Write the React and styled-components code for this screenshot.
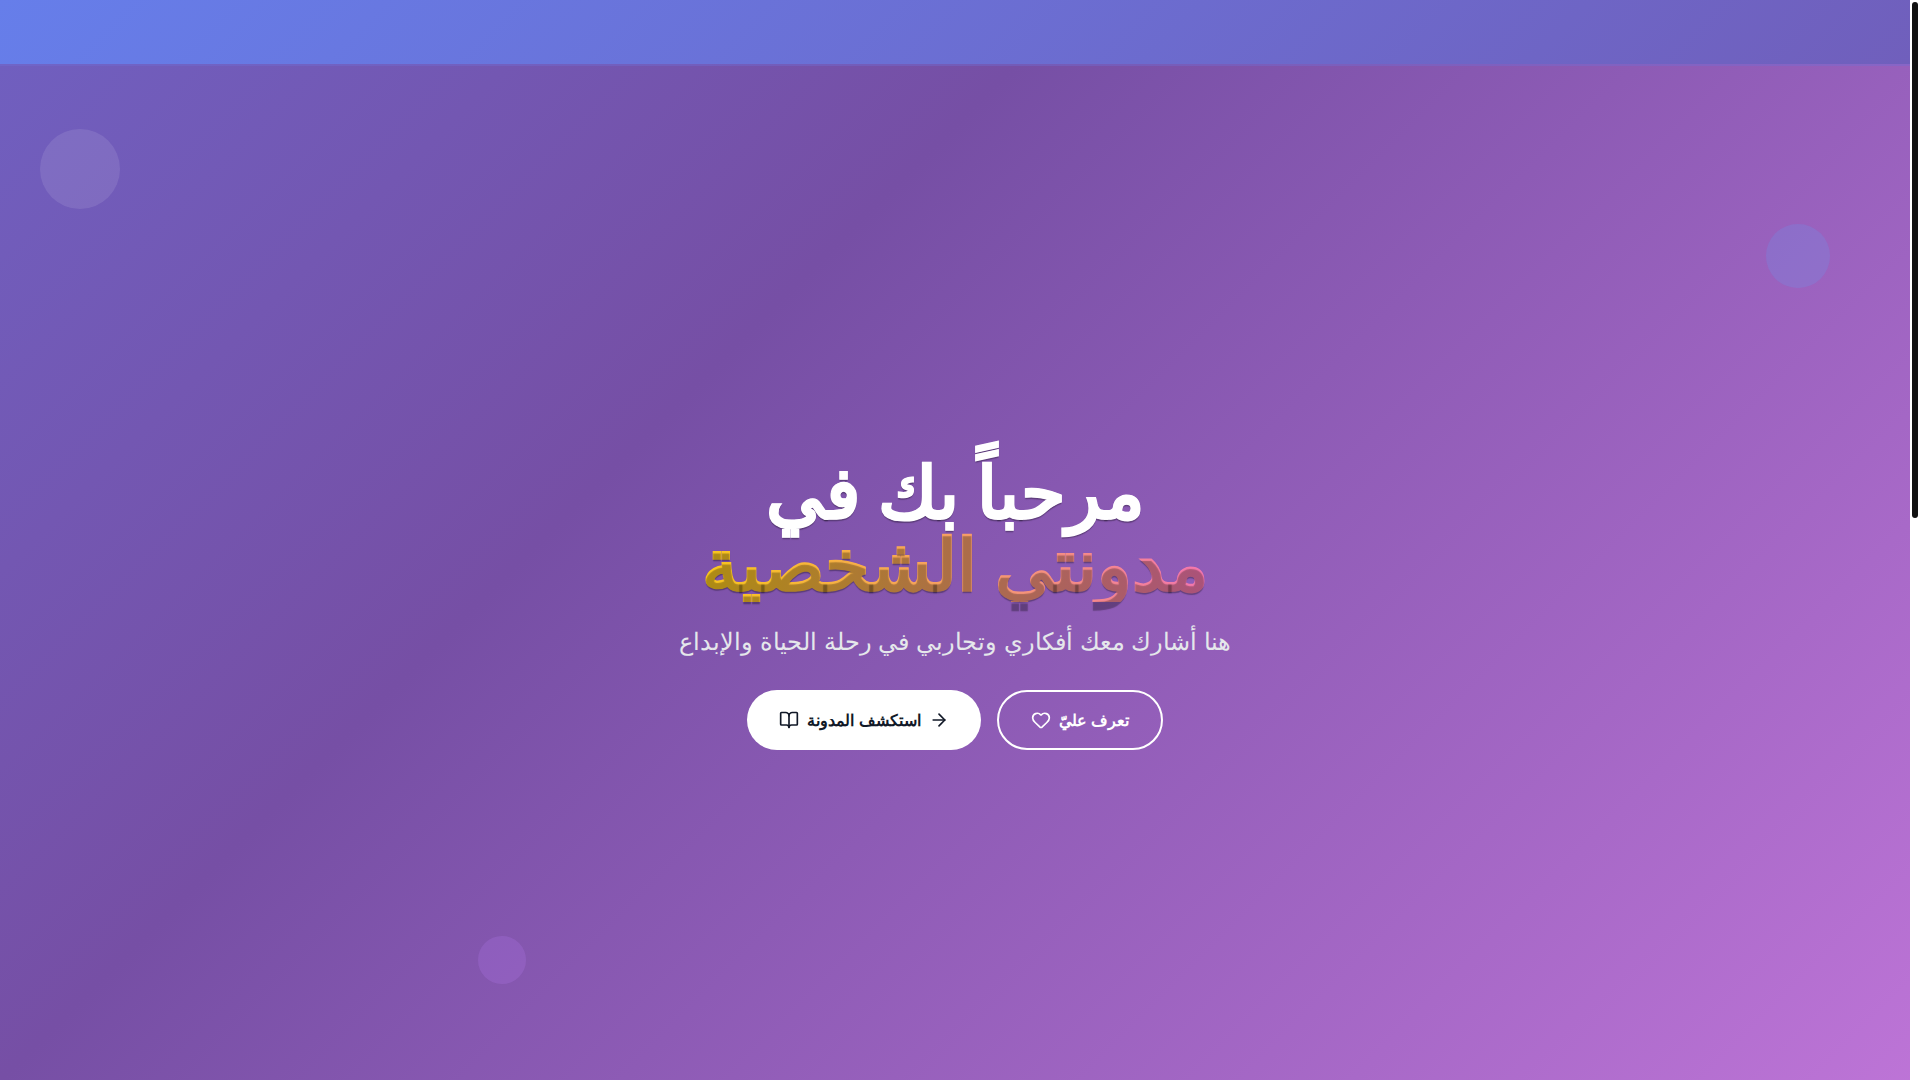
import React from 'react'
import styled, { createGlobalStyle } from 'styled-components'
import { ArrowRight, BookOpen, Heart } from 'lucide-react'

const GlobalStyle = createGlobalStyle`
  *,
  *::before,
  *::after {
    box-sizing: border-box;
  }

  body {
    margin: 0;
    background: #ffffff;
    font-family: Inter, sans-serif;
    font-size: 16px;
    line-height: 24px;
  }
`

const Window = styled.div`
  display: flex;
  height: 100vh;
  overflow: hidden;
`

const Page = styled.div`
  flex: 1;
  min-width: 0;
  overflow: hidden;
`

const Track = styled.div`
  width: 10px;
  padding: 2px;
  background: #ffffff;
`

const Thumb = styled.div`
  height: 48%;
  border-radius: 3px;
  background: #111111;
`

const Header = styled.header`
  position: relative;
  z-index: 1;
  height: 64px;
  background: linear-gradient(135deg, #667eea 0%, #705fbc 100%);
  box-shadow: 0 2px 0 rgba(112, 110, 212, 0.4);
`

const Hero = styled.section`
  position: relative;
  display: flex;
  align-items: center;
  justify-content: center;
  min-height: 100vh;
  background: linear-gradient(
    135deg,
    #705fbf 0%,
    #764fa5 34%,
    #bf75d8 100%
  );
`

const Bubble = styled.span`
  position: absolute;
  width: ${props => props.$size}px;
  height: ${props => props.$size}px;
  border-radius: 50%;
  background: ${props => props.$color};
`

const Content = styled.div`
  text-align: center;
`

const Title = styled.h1`
  margin: 0 0 24px;
  color: #ffffff;
  font-family: 'Liberation Serif', serif;
  font-size: 72px;
  font-weight: 700;
  line-height: 72px;
  text-shadow: 0 2px 1px rgba(0, 0, 0, 0.3);
  -webkit-text-stroke: 1px currentColor;
`

const Accent = styled.span`
  display: block;
  background: linear-gradient(to right, #facc15, #f472b6);
  background-clip: text;
  -webkit-background-clip: text;
  color: transparent;
`

const Subtitle = styled.p`
  margin: 0 0 32px;
  color: #e5e7eb;
  font-size: 24px;
  line-height: 32px;
`

const Buttons = styled.div`
  display: flex;
  justify-content: center;
  gap: 16px;
`

const Button = styled.button`
  display: inline-flex;
  align-items: center;
  gap: 8px;
  padding: 16px 32px;
  border: ${props => (props.$outline ? '2px solid #ffffff' : '0')};
  border-radius: 30px;
  min-height: 60px;
  background: ${props => (props.$outline ? 'transparent' : '#ffffff')};
  color: ${props => (props.$outline ? '#ffffff' : '#111827')};
  font-family: inherit;
  font-size: 16px;
  font-weight: 600;
  line-height: 24px;
  cursor: pointer;
`

const App = () => (
  <>
    <GlobalStyle />
    <Window>
      <Page>
        <Header />
        <Hero>
          <Bubble
            $size={80}
            $color="rgba(255, 255, 255, 0.1)"
            style={{ top: 65, left: 40 }}
          />
          <Bubble
            $size={64}
            $color="rgba(96, 165, 250, 0.2)"
            style={{ top: 160, right: 80 }}
          />
          <Bubble
            $size={48}
            $color="rgba(192, 132, 252, 0.2)"
            style={{ bottom: 160, left: '25%' }}
          />
          <Content lang="ar">
            <Title>
              مرحباً بك في
              <Accent>مدونتي الشخصية</Accent>
            </Title>
            <Subtitle>هنا أشارك معك أفكاري وتجاربي في رحلة الحياة والإبداع</Subtitle>
            <Buttons>
              <Button type="button">
                <BookOpen size={20} />
                استكشف المدونة
                <ArrowRight size={20} />
              </Button>
              <Button type="button" $outline>
                <Heart size={20} />
                تعرف عليّ
              </Button>
            </Buttons>
          </Content>
        </Hero>
      </Page>
      <Track>
        <Thumb />
      </Track>
    </Window>
  </>
)

export default App
